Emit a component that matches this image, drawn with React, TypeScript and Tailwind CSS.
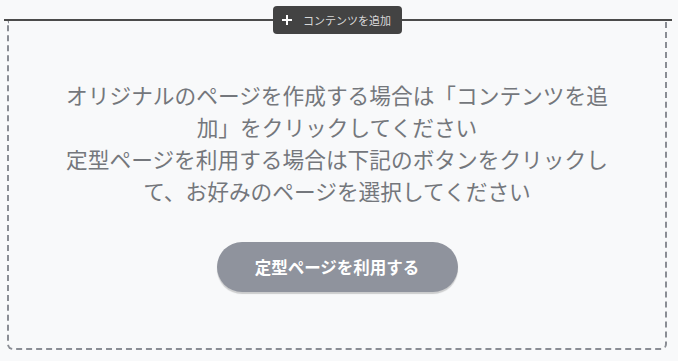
export default function App() {
  return (
    <div
      className="relative h-[361px] w-full bg-[#f8f9fa] pt-[19px]"
      style={{ fontFamily: '"Noto Sans CJK JP", "Noto Sans", sans-serif' }}
    >
      <div className="ml-[4px] mr-[6px] border-t-2 border-[#4b4b4b]" />
      <div className="ml-[7px] mr-[11px] flex h-[329px] flex-col items-center rounded-b-md border-2 border-t-0 border-dashed border-[#8a8d94] pt-[58px]">
        <div className="w-[552px] text-center text-[21.7px] leading-[32px] text-[#74777c]">
          <p>オリジナルのページを作成する場合は「コンテンツを追加」をクリックしてください</p>
          <p>定型ページを利用する場合は下記のボタンをクリックして、お好みのページを選択してください</p>
        </div>
        <button className="mt-[35px] flex h-[50px] w-[241px] items-center justify-center rounded-full bg-[#8f939d] text-[16.5px] font-bold text-white shadow-[0_2px_1px_rgba(0,0,0,0.18)]">
          定型ページを利用する
        </button>
      </div>
      <div className="absolute left-[273px] top-[6px] flex h-[28px] w-[129px] items-center gap-[10px] rounded-[4px] bg-[#434343] pl-[8px] text-[11px] text-[#d8d8d8]">
        <svg width="12" height="12" viewBox="0 0 12 12">
          <path d="M6 1v10M1 6h10" stroke="#ffffff" strokeWidth="2" />
        </svg>
        <span>コンテンツを追加</span>
      </div>
    </div>
  );
}
